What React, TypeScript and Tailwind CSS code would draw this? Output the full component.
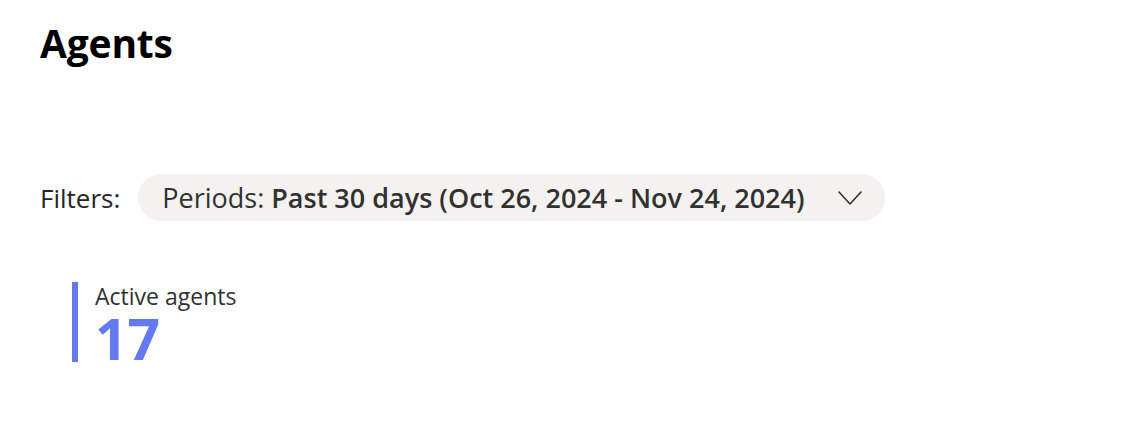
export default function App() {
    return (
        <div className="min-h-[433px] bg-white px-10 pt-[19px] text-black" style={{ fontFamily: '"Open Sans", "Noto Sans", sans-serif' }}>
            <h1 className="text-[39px] font-bold leading-[48px] tracking-[-0.2px]">Agents</h1>

            <div className="mt-[107px] flex items-center gap-[18px]">
                <span className="text-[26px] leading-8 text-[#242424]">Filters:</span>
                <button className="flex h-[47px] items-center rounded-full bg-[#f3f2f1] pl-6 pr-[23px] text-[27px] leading-8 text-[#323130]">
                    <span>Periods:&nbsp;</span>
                    <span className="font-semibold">Past 30 days (Oct 26, 2024 - Nov 24, 2024)</span>
                    <svg className="ml-[33px]" width="24" height="14" viewBox="0 0 24 14" fill="none" stroke="#323130" strokeWidth="1.6" strokeLinecap="round" strokeLinejoin="round">
                        <path d="M1 1l11 12L23 1" />
                    </svg>
                </button>
            </div>

            <div className="mt-[61px] ml-8 flex items-start gap-[17px]">
                <div className="h-[80px] w-[6px] bg-[#6479ef]" />
                <div className="flex flex-col">
                    <span className="text-[23px] leading-7 text-[#323130]">Active agents</span>
                    <span className="text-[57px] font-bold leading-[57px] text-[#6479ef]">17</span>
                </div>
            </div>
        </div>
    );
}
